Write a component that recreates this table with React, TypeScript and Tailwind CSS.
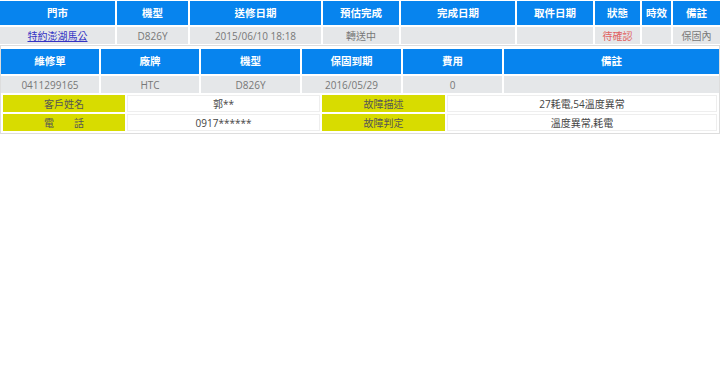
import React from 'react'

const head1 = ['門市', '機型', '送修日期', '預估完成', '完成日期', '取件日期', '狀態', '時效', '備註']
const head2 = ['維修單', '廠牌', '機型', '保固到期', '費用', '備註']
const row2 = ['0411299165', 'HTC', 'D826Y', '2016/05/29', '0', '']

const th = 'flex items-center justify-center bg-[#0784ee] text-white font-bold text-[10.5px]'
const td = 'flex items-center justify-center bg-[#e5e7e9] text-[#777] whitespace-nowrap'
const label = 'flex items-center justify-center bg-[#d8dc00] text-[#555]'
const value = 'flex items-center justify-center bg-white border border-[#eeeeee] text-[#444]'

const App: React.FC = () => {
  return (
    <div className="w-[720px] h-[386px] bg-white font-['Open_Sans','Noto_Sans_CJK_TC',sans-serif] text-[10px] leading-none">
      {/* 門市 table */}
      <div className="grid grid-cols-[115px_71px_131px_76px_114px_76px_45px_29px_47px] grid-rows-[24px_17px] gap-[2px] pt-[1px]">
        {head1.map((h) => (
          <div key={h} className={th}>
            {h}
          </div>
        ))}
        <div className={td}>
          <a href="#" className="text-[#3434c4] underline">
            特約澎湖馬公
          </a>
        </div>
        <div className={td}>D826Y</div>
        <div className={td}>2015/06/10 18:18</div>
        <div className={td}>轉送中</div>
        <div className={td}></div>
        <div className={td}></div>
        <div className={`${td} text-[#e06060]`}>待確認</div>
        <div className={td}></div>
        <div className={td}>保固內</div>
      </div>

      {/* 維修單 table */}
      <div className="mt-[1px] border border-[#dddddd] pt-[3px] pb-[2px]">
        <div className="grid grid-cols-[98px_98px_99px_99px_99px_1fr] grid-rows-[25px_17px] gap-[2px]">
          {head2.map((h, i) => (
            <div key={i} className={th}>
              {h}
            </div>
          ))}
          {row2.map((v, i) => (
            <div key={i} className={td}>
              {v}
            </div>
          ))}
        </div>
        <div className="mt-[2px] px-[2px] grid grid-cols-[122px_193px_123px_1fr] grid-rows-[17px_17px] gap-[2px]">
          <div className={label}>客戶姓名</div>
          <div className={value}>郭**</div>
          <div className={label}>故障描述</div>
          <div className={value}>27耗電,54溫度異常</div>
          <div className={label}>電　　話</div>
          <div className={value}>0917******</div>
          <div className={label}>故障判定</div>
          <div className={value}>溫度異常,耗電</div>
        </div>
      </div>
    </div>
  )
}

export default App
